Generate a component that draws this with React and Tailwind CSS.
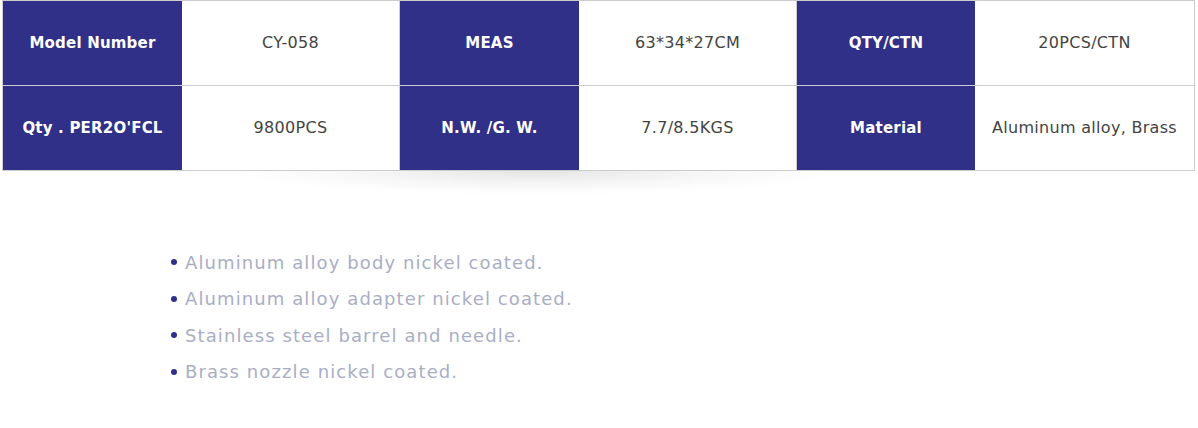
import React from "react";

const rows = [
  [
    ["Model Number", "CY-058"],
    ["MEAS", "63*34*27CM"],
    ["QTY/CTN", "20PCS/CTN"],
  ],
  [
    ["Qty . PER2O'FCL", "9800PCS"],
    ["N.W. /G. W.", "7.7/8.5KGS"],
    ["Material", "Aluminum alloy, Brass"],
  ],
];

const items = [
  "Aluminum alloy body nickel coated.",
  "Aluminum alloy adapter nickel coated.",
  "Stainless steel barrel and needle.",
  "Brass nozzle nickel coated.",
];

export default function App() {
  return (
    <div className="w-[1198px] h-[428px] bg-white overflow-hidden font-['DejaVu_Sans',sans-serif]">
      <div className="ml-[2px] w-[1193px] border border-[#cccccc] grid grid-cols-[179px_218px_179px_218px_178px_219px]">
        {rows.map((row, ri) =>
          row.map(([k, v], ci) => (
            <React.Fragment key={ri + "-" + ci}>
              <div
                className={
                  "flex items-center justify-center bg-[#303088] text-white font-semibold text-[15px] tracking-[0.2px] " +
                  (ri === 0 ? "h-[85px] border-b border-[#c9c9d6]" : "h-[84px]")
                }
              >
                {k}
              </div>
              <div
                className={
                  "flex items-center justify-center bg-white text-[#444444] text-[16px] tracking-[0.3px] " +
                  (ci < 2 ? "border-r border-[#cccccc] " : "") +
                  (ri === 0 ? "h-[85px] border-b border-[#cccccc]" : "h-[84px]")
                }
              >
                {v}
              </div>
            </React.Fragment>
          ))
        )}
      </div>
      <div className="ml-[230px] w-[610px] h-[24px] bg-[radial-gradient(ellipse_50%_100%_at_50%_0%,rgba(0,0,0,0.10),rgba(0,0,0,0.03)_60%,transparent_100%)]" />
      <ul className="ml-[171px] mt-[49px] flex flex-col">
        {items.map((t) => (
          <li key={t} className="flex items-center h-[36.5px] text-[18px] tracking-[1.1px] text-[#a9aec5]">
            <span className="w-[6px] h-[6px] rounded-full bg-[#303088] mr-[8px]" />
            {t}
          </li>
        ))}
      </ul>
    </div>
  );
}
